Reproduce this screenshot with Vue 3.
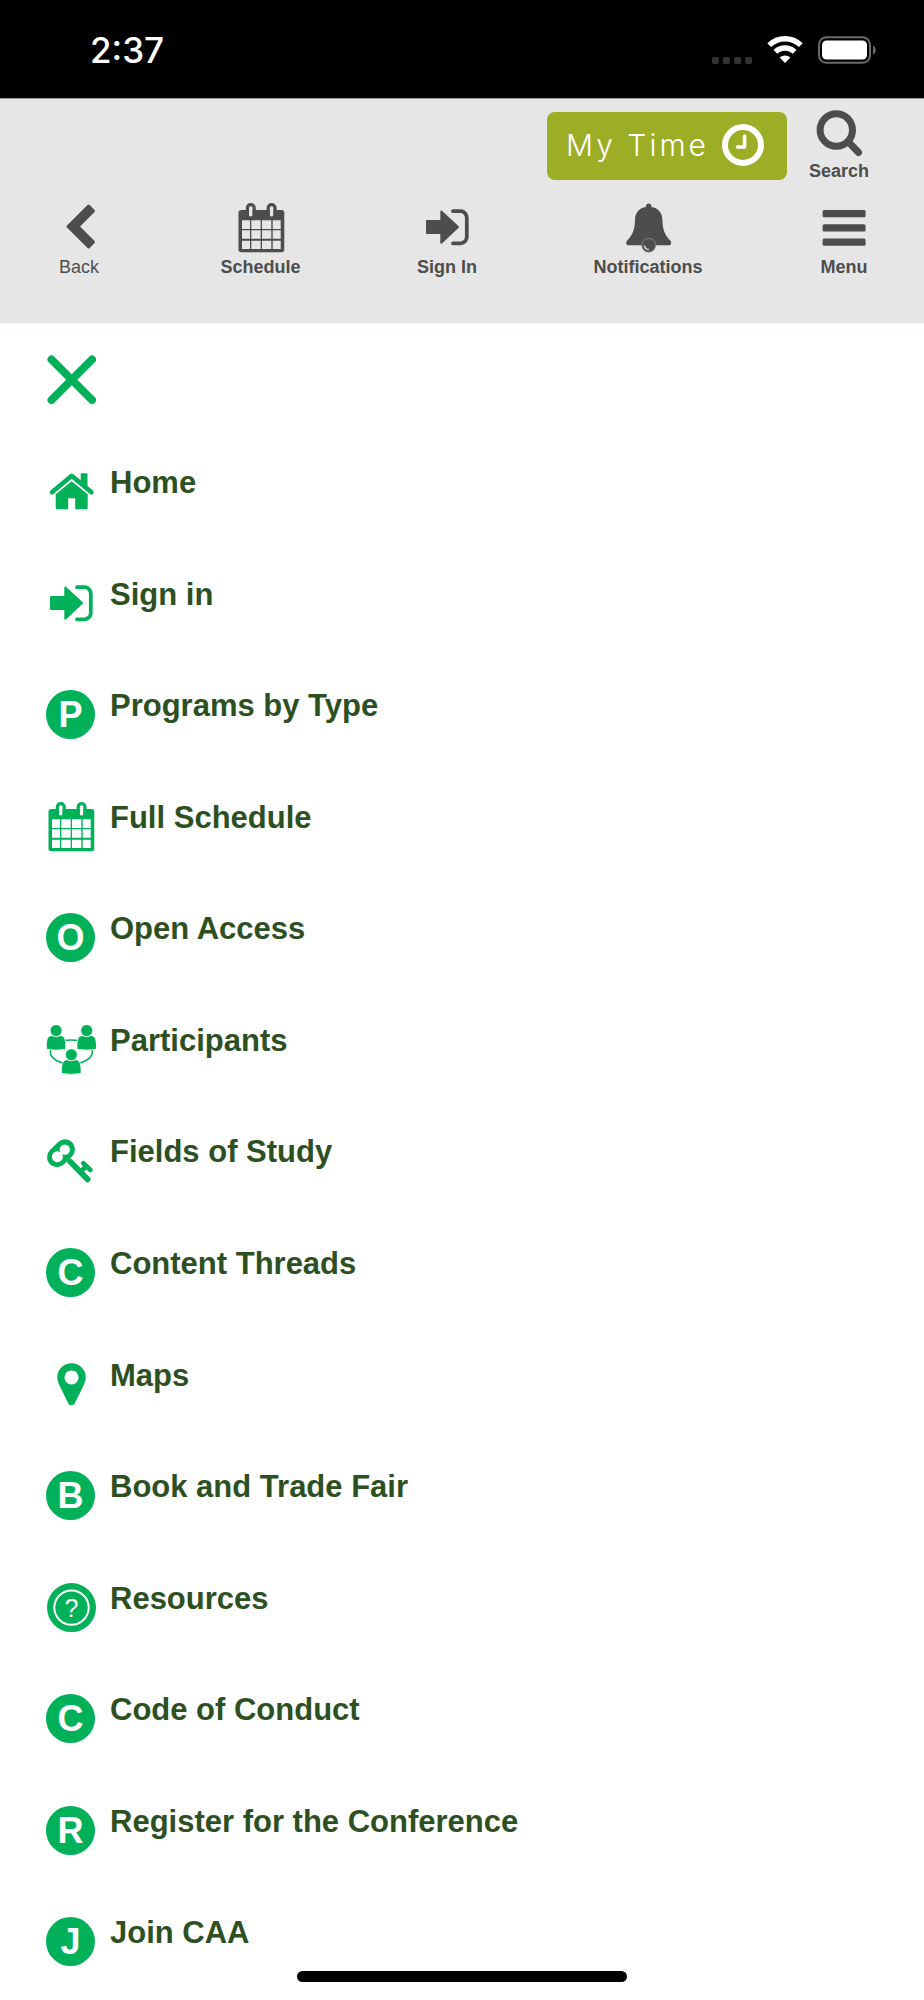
<script setup>
const items = [
  { label: 'Home', icon: 'home' },
  { label: 'Sign in', icon: 'signin' },
  { label: 'Programs by Type', letter: 'P' },
  { label: 'Full Schedule', icon: 'calendar' },
  { label: 'Open Access', letter: 'O' },
  { label: 'Participants', icon: 'people' },
  { label: 'Fields of Study', icon: 'key' },
  { label: 'Content Threads', letter: 'C' },
  { label: 'Maps', icon: 'pin' },
  { label: 'Book and Trade Fair', letter: 'B' },
  { label: 'Resources', icon: 'help' },
  { label: 'Code of Conduct', letter: 'C' },
  { label: 'Register for the Conference', letter: 'R' },
  { label: 'Join CAA', letter: 'J' },
]
</script>

<template>
  <div class="screen">
    <svg class="defs" width="0" height="0" aria-hidden="true">
      <symbol id="i-signin" viewBox="0 0 50 50">
        <path fill="currentColor" stroke="currentColor" stroke-width="2" stroke-linejoin="round" d="M5 18H19.300V8.400L36 24L19.300 39.700V30H5Z" />
        <path fill="none" stroke="currentColor" stroke-width="3.800" stroke-linecap="round" d="M31 8.200H38.500a6.300 6.300 0 0 1 6.300 6.300V34a6.300 6.300 0 0 1-6.300 6.300H31" />
      </symbol>
      <symbol id="i-calendar" viewBox="0 0 50 50">
        <path fill="currentColor" fill-rule="evenodd" d="M5.200 7H45.600a2.700 2.700 0 0 1 2.700 2.700V46.500a2.700 2.700 0 0 1-2.700 2.700H5.200a2.700 2.700 0 0 1-2.700-2.700V9.700A2.700 2.700 0 0 1 5.200 7Z
          M13 7V13.700H16.600V7Z M33.800 7V13.700H37.400V7Z
          M6 17.300V26H14V17.300Z M15.300 17.300V26H24.700V17.300Z M26 17.300V26H35.300V17.300Z M36.700 17.300V26H44.700V17.300Z
          M6 27.300V35.700H14V27.300Z M15.300 27.300V35.700H24.700V27.300Z M26 27.300V35.700H35.300V27.300Z M36.700 27.300V35.700H44.700V27.300Z
          M6 37.700V46H14V37.700Z M15.300 37.700V46H24.700V37.700Z M26 37.700V46H35.300V37.700Z M36.700 37.700V46H44.700V37.700Z" />
        <g fill="none" stroke="currentColor" stroke-width="3.200">
          <rect x="11.400" y="1.600" width="6.800" height="13.500" rx="3.200" />
          <rect x="32.200" y="1.600" width="6.800" height="13.500" rx="3.200" />
        </g>
      </symbol>
    </svg>

    <div class="status">
      <span class="time">2:37</span>
      <span class="indicators">
        <span class="dots"><i></i><i></i><i></i><i></i></span>
        <svg width="36" height="28" viewBox="0 0 36 28" aria-label="Wi-Fi">
          <g fill="none" stroke="#fff" stroke-width="5.400">
            <path d="M2.200 9.200A22.500 22.500 0 0 1 33.800 9.200" />
            <path d="M8.400 15.900A13.800 13.800 0 0 1 27.600 15.900" />
          </g>
          <path fill="#fff" d="M18 27L12.600 21.600A8 8 0 0 1 23.400 21.600Z" />
        </svg>
        <svg width="58" height="28" viewBox="0 0 58 28" aria-label="Battery">
          <rect x="1" y="1.200" width="51" height="25.600" rx="7.500" fill="none" stroke="#6a6a6a" stroke-width="2" />
          <rect x="4" y="4.400" width="45" height="19.200" rx="4.500" fill="#fff" />
          <path fill="#6a6a6a" d="M55 9.500a5 5 0 0 1 0 9Z" />
        </svg>
      </span>
    </div>

    <header class="header">
      <div class="top-row">
        <button class="my-time" type="button">
          My Time
          <svg width="42" height="42" viewBox="0 0 42 42" aria-hidden="true">
            <circle cx="21" cy="21" r="18" fill="none" stroke="#fff" stroke-width="6" />
            <path d="M22.600 12V23H15.500" fill="none" stroke="#fff" stroke-width="3.600" stroke-linecap="round" stroke-linejoin="round" />
          </svg>
        </button>
        <a class="tool" href="#search">
          <svg class="tool-icon" viewBox="0 0 50 50" aria-hidden="true">
            <path d="M35 35.500L44.500 45.500" stroke="currentColor" stroke-width="7" stroke-linecap="round" />
            <circle cx="22.300" cy="23" r="16.200" fill="none" stroke="currentColor" stroke-width="7" />
          </svg>
          <span>Search</span>
        </a>
      </div>
      <nav class="tools" aria-label="Toolbar">
        <a class="tool light" href="#back">
          <svg class="tool-icon" viewBox="0 0 50 50" aria-hidden="true">
            <path d="M14 23.500L34.600 3L39.500 8L24 23.500L39.500 39L34.600 44Z" fill="currentColor" stroke="currentColor" stroke-width="3" stroke-linejoin="round" />
          </svg>
          <span>Back</span>
        </a>
        <a class="tool" href="#schedule">
          <svg class="tool-icon" aria-hidden="true"><use href="#i-calendar" /></svg>
          <span>Schedule</span>
        </a>
        <a class="tool" href="#sign-in">
          <svg class="tool-icon" aria-hidden="true"><use href="#i-signin" /></svg>
          <span>Sign In</span>
        </a>
        <a class="tool" href="#notifications">
          <svg class="tool-icon" viewBox="0 0 50 50" aria-hidden="true">
            <path fill="currentColor" d="M23 4C22.200-.600 29.200-.600 28.400 4C35 4.800 39.200 9.500 39.400 16.500C39.600 27.500 42 32 47.200 37.500C49.200 39.900 48 42.300 45.500 42.300H5.900C3.400 42.300 2.200 39.900 4.200 37.500C9.400 32 11.800 27.500 12 16.500C12.200 9.500 16.400 4.800 23 4Z" />
            <circle cx="25.700" cy="42.300" r="6.900" fill="currentColor" stroke="#8c8c8c" stroke-width=".8" />
            <path d="M21.600 42.500a4.300 4.300 0 0 0 4.200 4" fill="none" stroke="#e6e6e6" stroke-width="1.300" />
          </svg>
          <span>Notifications</span>
        </a>
        <a class="tool" href="#menu">
          <svg class="tool-icon" viewBox="0 0 50 50" aria-hidden="true">
            <g fill="currentColor">
              <rect x="3.600" y="7" width="43" height="7.300" rx="1.500" />
              <rect x="3.600" y="21.300" width="43" height="7.300" rx="1.500" />
              <rect x="3.600" y="35.500" width="43" height="7.300" rx="1.500" />
            </g>
          </svg>
          <span>Menu</span>
        </a>
      </nav>
    </header>

    <main class="drawer">
      <button class="close" type="button" aria-label="Close menu">
        <svg width="50" height="50" viewBox="0 0 50 50" aria-hidden="true">
          <path d="M5.500 4.500L46 45M46 4.500L5.500 45" stroke="currentColor" stroke-width="8" stroke-linecap="round" />
        </svg>
      </button>

      <ul class="list">
        <li v-for="item in items" :key="item.label">
          <a class="item" href="#item">
            <span v-if="item.letter" class="badge" aria-hidden="true">{{ item.letter }}</span>
            <svg v-else class="icon" viewBox="0 0 50 50" aria-hidden="true">
              <use v-if="item.icon === 'signin'" href="#i-signin" />
              <use v-else-if="item.icon === 'calendar'" href="#i-calendar" />
              <g v-else-if="item.icon === 'home'" fill="currentColor">
                <path d="M6 25.200L25.700 8.800L45.400 25.200" fill="none" stroke="currentColor" stroke-width="4.600" stroke-linecap="round" stroke-linejoin="round" />
                <path d="M34.700 7.300a1 1 0 0 1 1-1h4.800a1 1 0 0 1 1 1V22L34.700 16.500Z" />
                <path d="M25.700 14.200L41.700 27.300V40.700a1.500 1.500 0 0 1-1.500 1.500H29.200V31.300H22.200V42.200H11.200a1.500 1.500 0 0 1-1.500-1.500V27.300Z" />
              </g>
              <g v-else-if="item.icon === 'people'" fill="currentColor">
                <ellipse cx="25.300" cy="27" rx="21" ry="12" fill="none" stroke="currentColor" stroke-width="1.500" />
                <g v-for="p in [[10.100, 5.600], [40.700, 5.600], [25.300, 29.800]]" :key="p[0]" stroke="#fff" stroke-width=".8">
                  <path :transform="`translate(${p[0]} ${p[1]})`" d="M-9.700 18.600C-10 9.500-9 5.500-4.500 5Q0 6.500 4.500 5C9 5.500 10 9.500 9.700 18.600Q0 20.600-9.700 18.600Z" />
                  <circle :cx="p[0]" :cy="p[1]" r="6" />
                </g>
              </g>
              <g v-else-if="item.icon === 'key'">
                <g fill="none" stroke="currentColor" stroke-linecap="round">
                  <path d="M19 13.300L11 21.200" stroke-width="20" />
                  <path d="M24 25.500L41.600 43.400" stroke-width="5.800" />
                  <path d="M34.500 35.700L40.500 30" stroke-width="4.600" stroke-linecap="butt" />
                  <path d="M37.300 27.200L44.400 33.900" stroke-width="4.800" />
                </g>
                <g fill="#fff">
                  <circle cx="18.800" cy="13.600" r="5.200" />
                  <circle cx="11.400" cy="20.700" r="5.500" />
                </g>
              </g>
              <path v-else-if="item.icon === 'pin'" fill="currentColor" fill-rule="evenodd" d="M25.500 3.200A14.200 14.200 0 0 1 39.700 17.400C39.700 21 38 24.500 36.500 27.500L28.800 43.200C27.600 46 23.400 46 22.200 43.200L14.500 27.500C13 24.500 11.300 21 11.300 17.400A14.200 14.200 0 0 1 25.500 3.200ZM25.500 10.400a7 7 0 1 0 .001 0Z" />
              <g v-else>
                <circle cx="25.500" cy="24.600" r="24.500" fill="currentColor" />
                <circle cx="25.500" cy="24.600" r="17.200" fill="none" stroke="#fff" stroke-width="2" />
                <text x="25.500" y="33.500" class="mark">?</text>
              </g>
            </svg>
            <span class="label">{{ item.label }}</span>
          </a>
        </li>
      </ul>
    </main>
    <div class="home-bar"></div>
  </div>
</template>

<style>
body {
  background: #fff;
}
</style>

<style scoped>
* {
  box-sizing: border-box;
}
.screen {
  position: relative;
  display: flex;
  flex-direction: column;
  min-height: 100vh;
  overflow: hidden;
  font-family: "Liberation Sans", Arial, sans-serif;
}
.defs {
  position: absolute;
}
.status {
  display: flex;
  justify-content: space-between;
  align-items: center;
  padding: 28px 48px 26px 90px;
  background: #000;
  color: #fff;
}
.time {
  font-family: Inter, sans-serif;
  font-size: 35px;
  font-weight: 500;
  line-height: 44px;
}
.indicators {
  display: flex;
  align-items: flex-end;
  gap: 15px;
}
.dots {
  display: flex;
  gap: 4px;
}
.dots i {
  width: 7px;
  height: 7px;
  border-radius: 2px;
  background: #333;
}
.header {
  padding: 8px 55px 44px 54px;
  border-top: 1px solid #999;
  border-bottom: 1px solid #dbe3df;
  background: #e6e6e6;
  color: #4d4d4d;
}
.top-row {
  display: flex;
  justify-content: flex-end;
  align-items: flex-start;
  gap: 22px;
}
.my-time {
  display: flex;
  align-items: center;
  gap: 13px;
  margin-top: 5px;
  padding: 12px 23px 14px 19px;
  border: 0;
  border-radius: 8px;
  background: #9cad26;
  color: #fff;
  font-family: Inter, sans-serif;
  font-size: 30px;
  font-weight: 300;
  line-height: 42px;
  letter-spacing: 3px;
}
.tools {
  display: flex;
  justify-content: space-between;
  margin-top: 21px;
}
.tool {
  display: flex;
  flex-direction: column;
  align-items: center;
  gap: 3px;
  color: inherit;
  font-size: 18px;
  font-weight: 700;
  line-height: 22px;
  text-decoration: none;
}
.light {
  font-weight: 400;
}
.tool-icon {
  width: 50px;
  height: 50px;
}
.drawer {
  display: flex;
  flex: 1;
  flex-direction: column;
  padding-left: 46px;
}
.close {
  align-self: flex-start;
  display: flex;
  margin: 32px 0 33px;
  padding: 0;
  border: 0;
  background: none;
  color: #00b159;
}
.list {
  display: grid;
  flex: 1;
  grid-auto-rows: 1fr;
  margin: 0;
  padding: 0;
  list-style: none;
}
.item {
  display: grid;
  grid-template-columns: 50px 1fr;
  align-items: start;
  column-gap: 14px;
  padding: 29px 0 30px;
  color: #2d5023;
  font-size: 31px;
  font-weight: 700;
  line-height: 32px;
  text-decoration: none;
}
.icon {
  width: 50px;
  height: 50px;
  color: #00b159;
}
.badge {
  width: 49px;
  height: 49px;
  border-radius: 50%;
  background: #00b159;
  color: #fff;
  font-size: 36px;
  line-height: 49px;
  text-align: center;
}
.mark {
  fill: #fff;
  font-family: "Liberation Sans", Arial, sans-serif;
  font-size: 25px;
  font-weight: 400;
  text-anchor: middle;
}
.home-bar {
  position: absolute;
  bottom: 18px;
  left: 50%;
  width: 330px;
  height: 11px;
  margin-left: -165px;
  border-radius: 6px;
  background: #000;
}
</style>
